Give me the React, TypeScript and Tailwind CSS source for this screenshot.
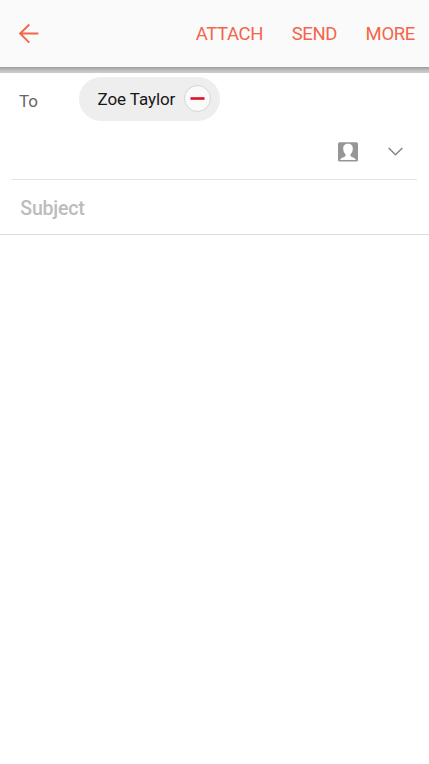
export default function App() {
  return (
    <div className="flex h-[764px] w-full flex-col overflow-hidden bg-white font-[Roboto,sans-serif]">
      <header className="flex h-[67px] shrink-0 items-center bg-[#fafafa] pl-[19px] pr-[14px] text-[18.5px] text-[#f4654b]">
        <svg width="20" height="20" viewBox="0 0 20 20" fill="none" stroke="currentColor" strokeWidth="1.900">
          <path d="M19.300 9.500H1.500M10.300 .5L1.100 9.500L10.300 18.700" />
        </svg>
        <nav className="ml-auto flex gap-[28.5px] whitespace-nowrap pt-[2px] tracking-[-0.35px]">
          <button>ATTACH</button>
          <button>SEND</button>
          <button>MORE</button>
        </nav>
      </header>
      <div className="h-[6px] shrink-0 bg-linear-to-b from-[#9c9c9c] via-[#bcbcbc] to-[#cecece]" />
      <section className="mx-3 flex h-[107px] shrink-0 flex-col border-b border-[#e4e4e4]">
        <div className="flex h-[48px] pt-[3.5px]">
          <span className="w-[66.700px] pl-[7px] pt-[12.5px] text-[17px] leading-6 text-[#666]">To</span>
          <div className="flex h-[44px] w-[141.5px] items-center rounded-full bg-[#eee] pl-[18.800px] text-[17px] text-[#171717]">
            <span className="w-[86.5px] whitespace-nowrap pt-[2px] tracking-[-0.08px]">Zoe Taylor</span>
            <svg width="27" height="27" viewBox="0 0 27 27">
              <circle cx="13.500" cy="13.500" r="13" fill="#fafafa" stroke="#d4d4d4" />
              <path d="M6.500 13.500H20.500" stroke="#dc1029" strokeWidth="2.600" />
            </svg>
          </div>
        </div>
        <div className="mt-[20.5px] flex items-center justify-end gap-[30px] pr-[14px]">
          <svg width="20" height="20" viewBox="0 0 20 20">
            <rect y=".2" width="20" height="19.300" rx="1.500" fill="#969696" />
            <path d="M10 1.800C6.800 1.800 5 3.800 5.200 6.800C5.300 9.300 6.200 11.200 7.500 12.200V14C6.700 15.200 2.800 15.600 2 18H18C17.200 15.600 13.300 15.200 12.500 14V12.200C13.800 11.200 14.700 9.300 14.800 6.800C15 3.800 13.200 1.800 10 1.800Z" fill="white" />
          </svg>
          <svg width="15" height="9" viewBox="0 0 15 9" fill="none" stroke="#858585" strokeWidth="1.500">
            <path d="M.7 1L7.500 7.800L14.300 1" />
          </svg>
        </div>
      </section>
      <div className="flex h-[55px] shrink-0 items-center border-b border-[#dcdcdc] pl-[20.300px] pt-[3px] text-[19.5px] font-medium tracking-[-0.2px] text-[#bcbcbc]">Subject</div>
      <main className="flex-1" />
    </div>
  );
}
